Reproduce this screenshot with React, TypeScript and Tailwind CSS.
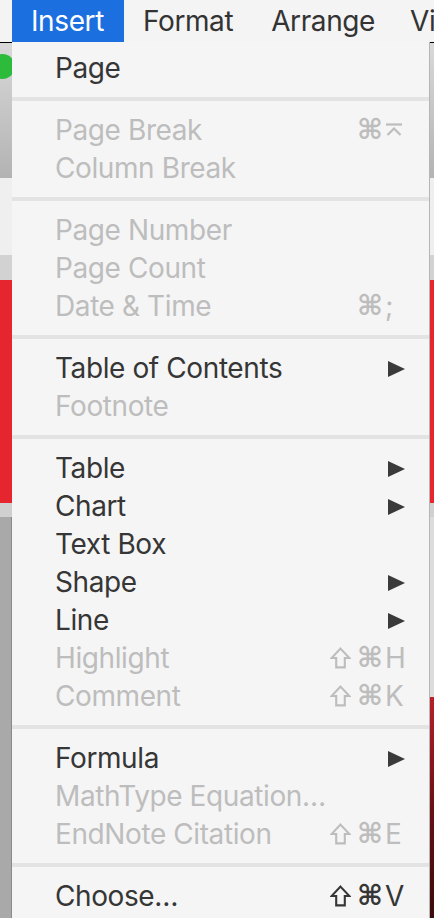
import React from "react";

type Item = {
  label: string;
  enabled?: boolean;
  sub?: boolean;
  shift?: boolean;
  cmd?: boolean;
  key?: string;
};

const sections: Item[][] = [
  [{ label: "Page", enabled: true }],
  [
    { label: "Page Break", cmd: true, key: "enter" },
    { label: "Column Break" },
  ],
  [
    { label: "Page Number" },
    { label: "Page Count" },
    { label: "Date & Time", cmd: true, key: ";" },
  ],
  [
    { label: "Table of Contents", enabled: true, sub: true },
    { label: "Footnote" },
  ],
  [
    { label: "Table", enabled: true, sub: true },
    { label: "Chart", enabled: true, sub: true },
    { label: "Text Box", enabled: true },
    { label: "Shape", enabled: true, sub: true },
    { label: "Line", enabled: true, sub: true },
    { label: "Highlight", shift: true, cmd: true, key: "H" },
    { label: "Comment", shift: true, cmd: true, key: "K" },
  ],
  [
    { label: "Formula", enabled: true, sub: true },
    { label: "MathType Equation…" },
    { label: "EndNote Citation", shift: true, cmd: true, key: "E" },
  ],
  [{ label: "Choose…", enabled: true, shift: true, cmd: true, key: "V" }],
];

function EnterGlyph({ color }: { color: string }) {
  return (
    <svg width="18" height="14" viewBox="0 0 18 14" fill="none">
      <path d="M1 1.5H17" stroke={color} strokeWidth="2.2" />
      <path d="M2.5 12L9 5.5L15.5 12" stroke={color} strokeWidth="2.2" />
    </svg>
  );
}

function ShiftGlyph({ color }: { color: string }) {
  return (
    <svg width="21" height="22" viewBox="0 0 21 22" fill="none">
      <path
        d="M10.5 1.6L19.4 11H14.8V20.4H6.2V11H1.6Z"
        stroke={color}
        strokeWidth="2.1"
        strokeLinejoin="miter"
      />
    </svg>
  );
}

function Row({ item }: { item: Item }) {
  const color = item.enabled ? "#363636" : "#bdbdbd";
  return (
    <div
      className="flex h-[38px] items-center pl-[43px] pr-[24px] text-[28px] leading-[38px] tracking-[-0.4px]"
      style={{ color }}
    >
      <span className="flex-1 whitespace-nowrap">{item.label}</span>
      {item.sub && (
        <svg width="17" height="16" viewBox="0 0 17 16" className="mt-[1px]">
          <path d="M0 0L17 8L0 16Z" fill="#3a3a3a" />
        </svg>
      )}
      {item.key && (
        <span className="flex items-center">
          {item.shift && (
            <span className="mr-[6px] flex items-center">
              <ShiftGlyph color={color} />
            </span>
          )}
          {item.cmd && (
            <span className="font-['DejaVu_Sans'] text-[28px] font-bold leading-[38px] tracking-normal">⌘</span>
          )}
          <span className="ml-[2px] flex w-[20px] items-center text-[28px] tracking-normal">
            {item.key === "enter" ? <EnterGlyph color={color} /> : item.key}
          </span>
        </span>
      )}
    </div>
  );
}

export default function App() {
  return (
    <div className="relative h-[918px] w-[434px] overflow-hidden bg-[#a9a9a9] font-['Inter','Liberation_Sans',sans-serif]">
      {/* Menu bar */}
      <div className="flex h-[42px] items-center overflow-hidden whitespace-nowrap bg-[#f4f4f4] text-[28px] leading-[42px] tracking-[-0.4px] text-[#333]">
        <div className="ml-[12px] h-[42px] w-[112px] shrink-0 bg-[#1b6fdf] pl-[19px] text-white">Insert</div>
        <div className="ml-[19px] shrink-0">Format</div>
        <div className="ml-[38px] shrink-0">Arrange</div>
        <div className="ml-[35px] shrink-0">Vi</div>
      </div>
      {/* Window behind */}
      <div className="flex flex-col border-t border-black">
        <div className="relative h-[135px] bg-gradient-to-b from-[#d9d9d9] to-[#b3b3b3]">
          <div className="absolute left-[-10px] top-[11px] h-[25px] w-[25px] rounded-full bg-[#2dbb3c]" />
        </div>
        <div className="h-[77px] bg-[#efefef]" />
        <div className="h-[25px] bg-[#d2d2d2]" />
        <div className="h-[223px] bg-[#e5262f]" />
        <div className="h-[14px] bg-[#d0d0d0]" />
        <div className="flex h-[402px]">
          <div className="w-[11px] bg-[#a9a9a9]" />
          <div className="w-[1px] bg-[#8a8a8a]" />
          <div className="flex-1" />
          <div className="flex w-[4px] flex-col">
            <div className="h-[180px] bg-[#dcdcdc]" />
            <div className="flex-1 bg-gradient-to-b from-[#b8202a] via-[#6a0f14] to-[#3a0a0c]" />
          </div>
        </div>
      </div>
      {/* Dropdown menu */}
      <div className="absolute left-[12px] top-[42px] w-[418px] border-r border-[#b5b5b5] bg-[#f5f5f5] pt-[7px] pb-[10px]">
        {sections.map((sec, i) => (
          <div key={i}>
            {i > 0 && (
              <div className="flex h-[24px] items-center">
                <div className="h-[4px] w-full bg-[#e3e3e3]" />
              </div>
            )}
            {sec.map((it) => (
              <Row key={it.label} item={it} />
            ))}
          </div>
        ))}
      </div>
    </div>
  );
}
